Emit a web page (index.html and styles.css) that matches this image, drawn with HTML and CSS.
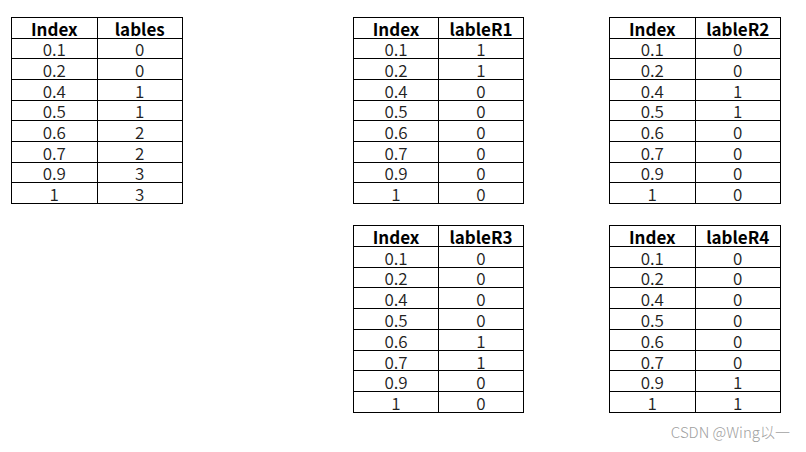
FILE: index.html
```html
<!DOCTYPE html>
<html>
<head>
<meta charset="utf-8">
<link rel="stylesheet" href="styles.css">
</head>
<body>
<div class="board">
  <div class="tbl t-main">
    <div class="c h">Index</div><div class="c h">lables</div>
    <div class="c">0.1</div><div class="c">0</div>
    <div class="c">0.2</div><div class="c">0</div>
    <div class="c">0.4</div><div class="c">1</div>
    <div class="c">0.5</div><div class="c">1</div>
    <div class="c">0.6</div><div class="c">2</div>
    <div class="c">0.7</div><div class="c">2</div>
    <div class="c">0.9</div><div class="c">3</div>
    <div class="c">1</div><div class="c">3</div>
  </div>
  <div class="tbl t-r1">
    <div class="c h">Index</div><div class="c h">lableR1</div>
    <div class="c">0.1</div><div class="c">1</div>
    <div class="c">0.2</div><div class="c">1</div>
    <div class="c">0.4</div><div class="c">0</div>
    <div class="c">0.5</div><div class="c">0</div>
    <div class="c">0.6</div><div class="c">0</div>
    <div class="c">0.7</div><div class="c">0</div>
    <div class="c">0.9</div><div class="c">0</div>
    <div class="c">1</div><div class="c">0</div>
  </div>
  <div class="tbl t-r2">
    <div class="c h">Index</div><div class="c h">lableR2</div>
    <div class="c">0.1</div><div class="c">0</div>
    <div class="c">0.2</div><div class="c">0</div>
    <div class="c">0.4</div><div class="c">1</div>
    <div class="c">0.5</div><div class="c">1</div>
    <div class="c">0.6</div><div class="c">0</div>
    <div class="c">0.7</div><div class="c">0</div>
    <div class="c">0.9</div><div class="c">0</div>
    <div class="c">1</div><div class="c">0</div>
  </div>
  <div class="tbl t-r3">
    <div class="c h">Index</div><div class="c h">lableR3</div>
    <div class="c">0.1</div><div class="c">0</div>
    <div class="c">0.2</div><div class="c">0</div>
    <div class="c">0.4</div><div class="c">0</div>
    <div class="c">0.5</div><div class="c">0</div>
    <div class="c">0.6</div><div class="c">1</div>
    <div class="c">0.7</div><div class="c">1</div>
    <div class="c">0.9</div><div class="c">0</div>
    <div class="c">1</div><div class="c">0</div>
  </div>
  <div class="tbl t-r4">
    <div class="c h">Index</div><div class="c h">lableR4</div>
    <div class="c">0.1</div><div class="c">0</div>
    <div class="c">0.2</div><div class="c">0</div>
    <div class="c">0.4</div><div class="c">0</div>
    <div class="c">0.5</div><div class="c">0</div>
    <div class="c">0.6</div><div class="c">0</div>
    <div class="c">0.7</div><div class="c">0</div>
    <div class="c">0.9</div><div class="c">1</div>
    <div class="c">1</div><div class="c">1</div>
  </div>
</div>
<div class="watermark">CSDN @Wing以一</div>
</body>
</html>
```
FILE: styles.css
```css
html, body {
  margin: 0;
  padding: 0;
  background: #fff;
}
body {
  width: 806px;
  height: 452px;
  position: relative;
  overflow: hidden;
  font-family: "Noto Sans CJK SC", "Noto Sans", sans-serif;
}
.board {
  display: grid;
  grid-template-columns: 172px 170px 171px 85px 172px;
  grid-template-rows: 187px 188px;
  row-gap: 21px;
  padding: 17px 0 0 11px;
}
.t-main { grid-column: 1; grid-row: 1; }
.t-r1 { grid-column: 3; grid-row: 1; }
.t-r2 { grid-column: 5; grid-row: 1; }
.t-r3 { grid-column: 3; grid-row: 2; }
.t-r4 { grid-column: 5; grid-row: 2; }
.tbl {
  display: grid;
  grid-template-columns: 1fr 1fr;
  grid-template-rows: repeat(9, 1fr);
  border-left: 1px solid #000;
  border-top: 1px solid #000;
  box-sizing: border-box;
}
.c {
  border-right: 1px solid #000;
  border-bottom: 1px solid #000;
  display: flex;
  align-items: center;
  justify-content: center;
  font-size: 17px;
  font-weight: 350;
  line-height: 1;
  color: #222;
  padding-top: 1px;
}
.c.h {
  font-weight: bold;
  color: #000;
}
.watermark {
  position: absolute;
  right: 16px;
  top: 423px;
  font-size: 15px;
  font-weight: 300;
  line-height: 18px;
  color: #a0a0a0;
  font-family: "Noto Sans CJK SC", "Noto Sans", sans-serif;
}
```
